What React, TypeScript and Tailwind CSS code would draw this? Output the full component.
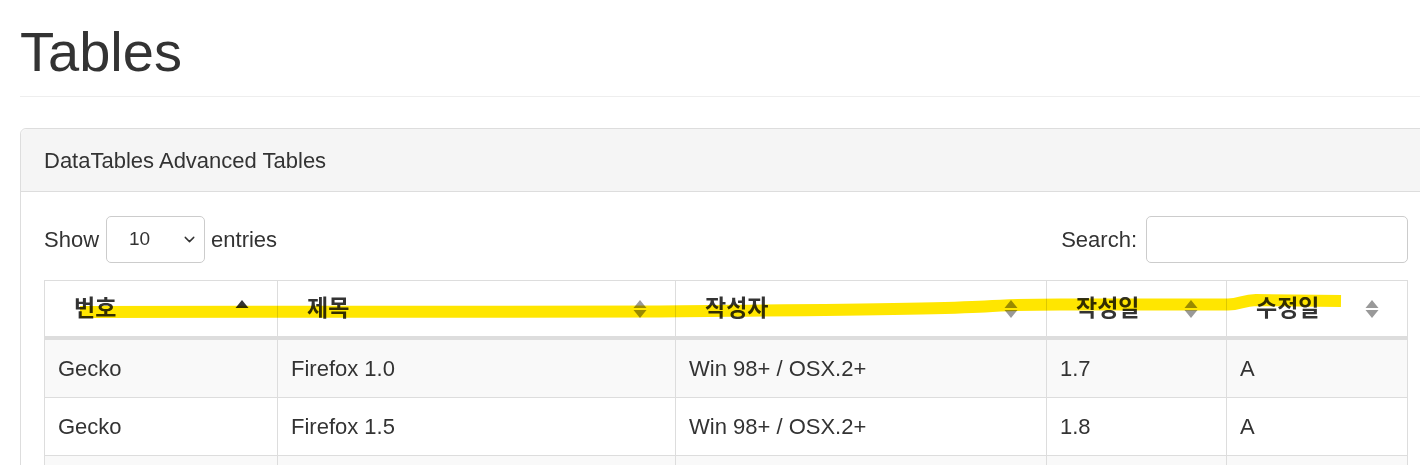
import { ChevronDown } from 'lucide-react';

const columns = [
  { label: '번호', width: 'w-[234px]', sort: 'asc' },
  { label: '제목', width: 'w-[398px]', sort: 'both' },
  { label: '작성자', width: 'w-[371px]', sort: 'both' },
  { label: '작성일', width: 'w-[180px]', sort: 'both' },
  { label: '수정일', width: 'w-[181px]', sort: 'both' },
];

const rows = [
  { engine: 'Gecko', browser: 'Firefox 1.0', platform: 'Win 98+ / OSX.2+', version: '1.7', grade: 'A' },
  { engine: 'Gecko', browser: 'Firefox 1.5', platform: 'Win 98+ / OSX.2+', version: '1.8', grade: 'A' },
  { engine: 'Gecko', browser: 'Firefox 2.0', platform: 'Win 98+ / OSX.2+', version: '1.8', grade: 'A' },
];

export default function App() {
  return (
    <div className="relative h-[465px] w-[1420px] overflow-hidden bg-white font-['Liberation_Sans','Noto_Sans_CJK_KR',Arial,sans-serif] text-[#333]">
      <div className="ml-[20px] w-[1412px]">
        <h1 className="mt-[24px] h-[56px] text-[56px] leading-none font-normal">Tables</h1>
        <div className="mt-[16px] border-b border-[#eee]" />

        <div className="mt-[31px] rounded-[6px] border border-[#ddd]">
          <div className="flex h-[63px] items-center rounded-t-[6px] border-b border-[#ddd] bg-[#f5f5f5] px-[23px] text-[22px]">
            DataTables Advanced Tables
          </div>

          <div className="px-[23px] pt-[24px]">
            <div className="flex h-[47px] w-[1364px] items-center justify-between text-[22px]">
              <label className="flex items-center">
                Show
                <span className="relative ml-[7px] mr-[6px]">
                  <select className="h-[47px] w-[99px] appearance-none rounded-[5px] border border-[#ccc] bg-white pl-[22px] text-[19px] text-[#333]">
                    <option>10</option>
                    <option>25</option>
                    <option>50</option>
                    <option>100</option>
                  </select>
                  <ChevronDown
                    size={17}
                    strokeWidth={2}
                    className="pointer-events-none absolute right-[7px] top-[15px] text-[#333]"
                  />
                </span>
                entries
              </label>
              <label className="flex items-center">
                Search:
                <input className="ml-[9px] h-[47px] w-[262px] rounded-[5px] border border-[#ccc] bg-white" />
              </label>
            </div>

            <table className="mt-[17px] w-[1364px] table-fixed border-separate border-spacing-0 text-[22px]">
              <colgroup>
                {columns.map((col) => (
                  <col key={col.label} className={col.width} />
                ))}
              </colgroup>
              <thead>
                <tr>
                  {columns.map((col, i) => (
                    <th
                      key={col.label}
                      className={`h-[60px] border-t border-r border-b-4 border-[#ddd] p-0 text-left align-middle text-[23px] font-bold ${
                        i === 0 ? 'border-l' : ''
                      }`}
                    >
                      <div className="flex items-center justify-between pl-[29px] pr-[28px]">
                        <span>{col.label}</span>
                        <SortIcon mode={col.sort} />
                      </div>
                    </th>
                  ))}
                </tr>
              </thead>
              <tbody>
                {rows.map((row, r) => (
                  <tr key={r} className={r % 2 === 0 ? 'bg-[#f9f9f9]' : 'bg-white'}>
                    {[row.engine, row.browser, row.platform, row.version, row.grade].map((cell, i) => (
                      <td
                        key={i}
                        className={`h-[58px] border-r border-b border-[#ddd] py-0 pl-[13px] align-middle ${
                          i === 0 ? 'border-l' : ''
                        }`}
                      >
                        {cell}
                      </td>
                    ))}
                  </tr>
                ))}
              </tbody>
            </table>
          </div>
        </div>
      </div>

      {/* highlighter stroke drawn over the header row */}
      <svg
        className="pointer-events-none absolute left-0 top-0 mix-blend-multiply"
        width="1420"
        height="465"
        viewBox="0 0 1420 465"
      >
        <path
          d="M80 312 L660 311.5 C820 310 930 309.5 985 306.5 C1010 304.8 1030 304.5 1060 304.5 L1228 304.5 C1240 304 1243 300.5 1256 300 L1341 301"
          stroke="#ffe600"
          strokeWidth="12"
          fill="none"
        />
      </svg>
    </div>
  );
}

function SortIcon({ mode }: { mode: string }) {
  if (mode === 'asc') {
    return (
      <svg width="14" height="18" viewBox="0 0 14 18" className="shrink-0">
        <path d="M7 0 L13.5 8 L0.5 8 Z" fill="#333" />
      </svg>
    );
  }
  return (
    <svg width="14" height="18" viewBox="0 0 14 18" className="shrink-0">
      <path d="M7 0 L13.5 8 L0.5 8 Z" fill="#999" />
      <path d="M0.5 10 L13.5 10 L7 18 Z" fill="#999" />
    </svg>
  );
}
